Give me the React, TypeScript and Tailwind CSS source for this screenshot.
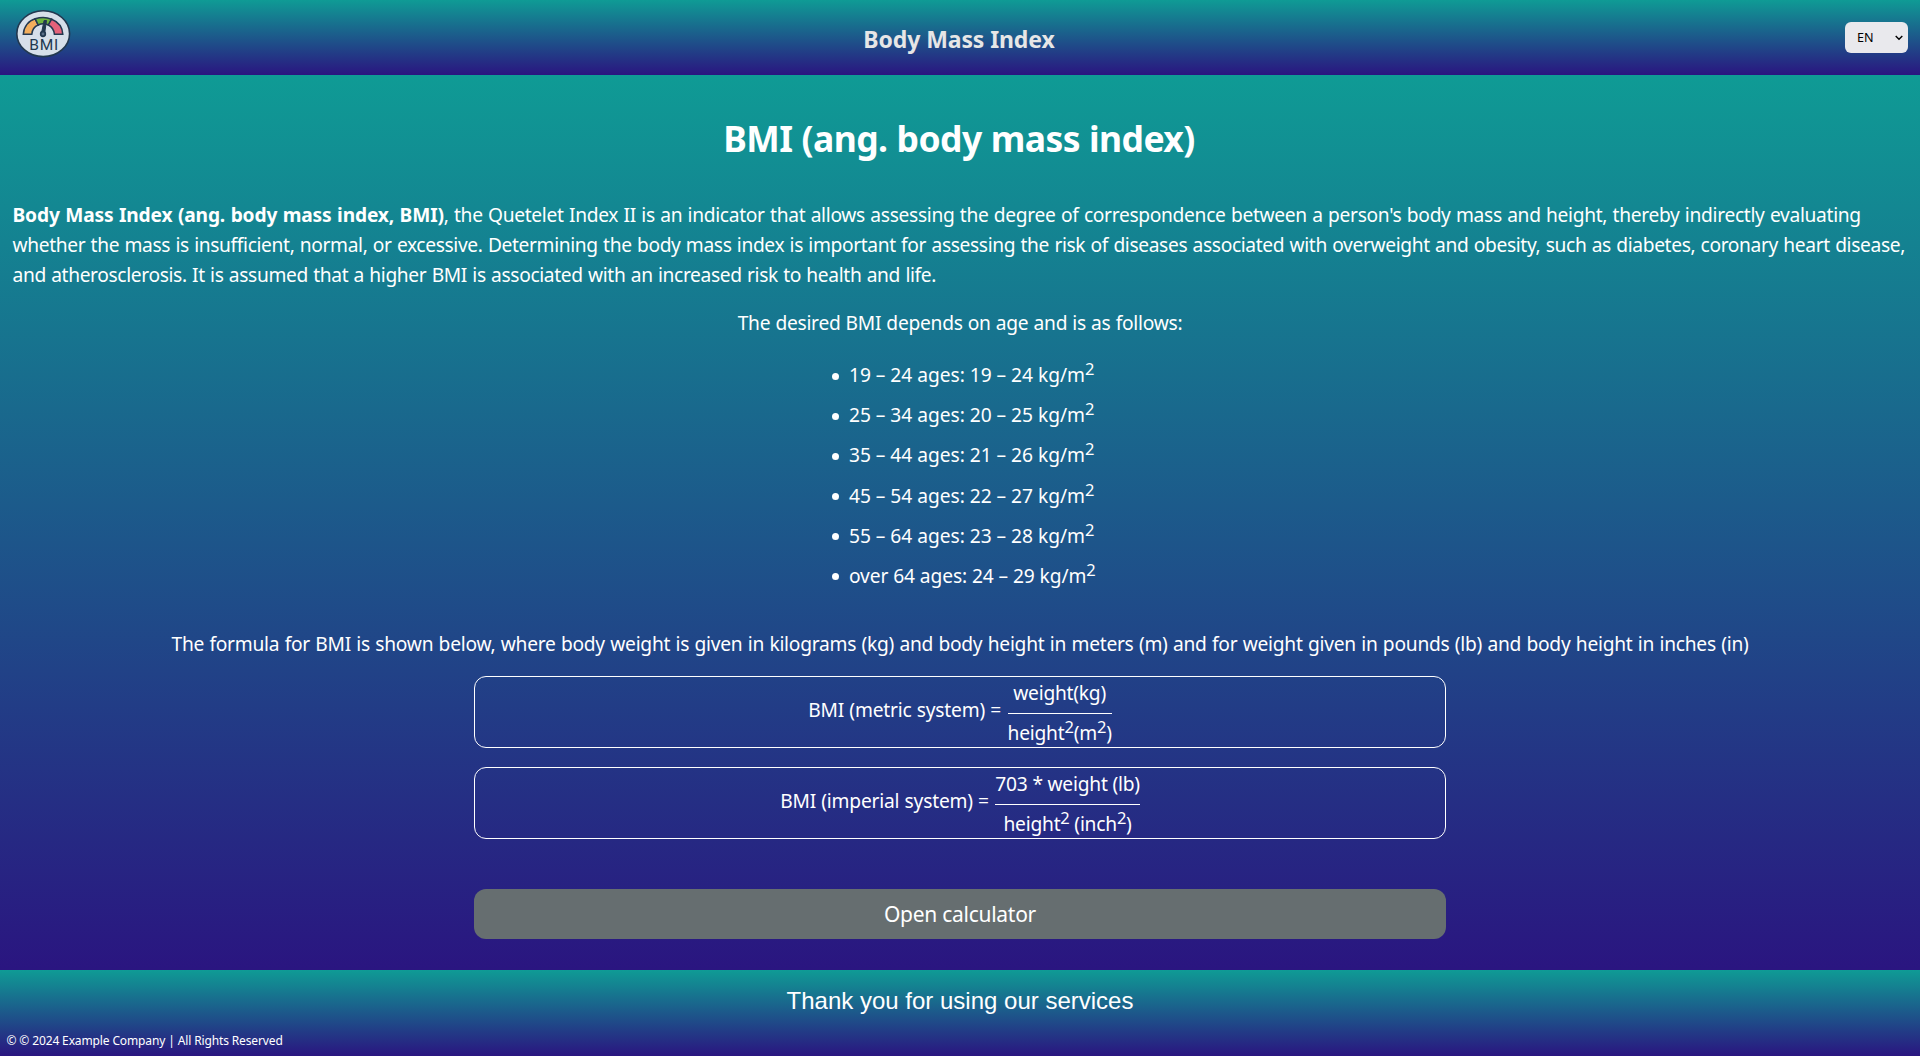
import type { ReactNode } from 'react';

const ranges = [
  '19 – 24 ages: 19 – 24 kg/m',
  '25 – 34 ages: 20 – 25 kg/m',
  '35 – 44 ages: 21 – 26 kg/m',
  '45 – 54 ages: 22 – 27 kg/m',
  '55 – 64 ages: 23 – 28 kg/m',
  'over 64 ages: 24 – 29 kg/m',
];

function Squared() {
  return <sup className="top-[-7px] align-baseline text-[16.5px] leading-[0]">2</sup>;
}

function Logo() {
  return (
    <svg className="h-[56px] w-[64px]" viewBox="10 5 64 56" fill="none" stroke="#22384f">
      <ellipse cx="43.2" cy="33.7" rx="26.4" ry="22.9" fill="#d6dfe9" strokeWidth="1.6" />
      <path d="M23.3 34.2C23.7 26.8 28.6 20.6 35.2 18.8L38.2 25C34.6 26.4 32.2 29.8 31.8 34.2Z" fill="#f2ae5c" strokeWidth="1.5" />
      <path d="M35.2 18.8C40.3 17 46.6 17 51.6 19.2L48.4 25C45.2 23.5 41.2 23.6 38.2 25Z" fill="#6db33f" strokeWidth="1.5" />
      <path d="M51.6 19.2C58.3 21.8 62.4 27.4 62.8 34.2H54.4C54 30.2 51.8 26.8 48.4 25Z" fill="#e4627a" strokeWidth="1.5" />
      <path d="M41.6 32.5L44.1 20.5H46.5L44.7 33Z" fill="#22384f" strokeWidth="1" />
      <circle cx="43" cy="34" r="2.3" fill="#5b7088" strokeWidth="1.7" />
      <text
        x="29.2"
        y="50"
        textLength="29"
        lengthAdjust="spacing"
        fill="#22384f"
        stroke="none"
        className="font-['Roboto',sans-serif] text-[15.5px]"
      >
        BMI
      </text>
    </svg>
  );
}

function Formula({ label, top, bottom }: { label: string; top: ReactNode; bottom: ReactNode }) {
  return (
    <div className="flex h-[72px] w-[972px] justify-center gap-[6.5px] rounded-xl border border-white">
      <span className="pt-[18px] leading-[30px] tracking-[-0.19px] [word-spacing:0.4px]">{label}</span>
      <div className="flex flex-col pt-px text-center tracking-[-0.22px]">
        <span className="h-[36px] shrink-0 border-b border-white leading-[30px]">{top}</span>
        <span className="h-[33px] pt-[4px] leading-[30px]">{bottom}</span>
      </div>
    </div>
  );
}

export default function App() {
  return (
    <div className="flex h-[1056px] w-full flex-col font-['Noto_Sans',sans-serif] text-[19.2px] text-white">
      <header className="grid h-[75px] grid-cols-[1fr_auto_1fr] bg-linear-to-b/srgb from-[#0f9b95] to-[#2a1580]">
        <div className="pt-[5px] pl-[10px]">
          <Logo />
        </div>
        <div className="pt-[19px] pr-[2px] text-[23px] leading-[40px] font-bold tracking-[-0.1px] text-[#e6e6e6]">
          Body Mass Index
        </div>
        <div className="flex justify-end pt-[22px] pr-[12px]">
          <button className="flex h-[31px] w-[63px] items-center justify-between rounded-md bg-[#e9e9ed] pr-[5px] pl-[12px] text-[12.6px] text-black">
            <span className="pt-px">EN</span>
            <svg className="h-[6px] w-[8px]" viewBox="0 0 8 6" fill="none" stroke="black" strokeWidth="1.4">
              <path d="M0.7 1L4 4.3L7.3 1" />
            </svg>
          </button>
        </div>
      </header>

      <main className="flex h-[895px] flex-col items-center bg-linear-to-b/srgb from-[#0f9b95] to-[#2a1580]">
        <h1 className="mt-[37px] pr-[2px] text-[35.5px] leading-[52px] font-bold tracking-[-0.58px] [word-spacing:0.5px]">
          BMI (ang. body mass index)
        </h1>
        <p className="mt-[36px] w-full pl-[12.5px] leading-[30px] whitespace-nowrap [word-spacing:0.7px]">
          <span className="block tracking-[-0.315px]">
            <strong className="tracking-[-0.16px]">Body Mass Index (ang. body mass index, BMI)</strong>, the Quetelet Index II is an
            indicator that allows assessing the degree of correspondence between a person's body mass and height, thereby
            indirectly evaluating
          </span>
          <span className="block tracking-[-0.36px]">
            whether the mass is insufficient, normal, or excessive. Determining the body mass index is important for assessing
            the risk of diseases associated with overweight and obesity, such as diabetes, coronary heart disease,
          </span>
          <span className="block tracking-[-0.36px]">
            and atherosclerosis. It is assumed that a higher BMI is associated with an increased risk to health and life.
          </span>
        </p>
        <p className="mt-[18px] leading-[30px] tracking-[-0.26px] [word-spacing:0.4px]">
          The desired BMI depends on age and is as follows:
        </p>
        <ul className="mt-[17px] ml-[7px] w-[263px]">
          {ranges.map((range) => (
            <li key={range} className="flex h-[40.17px] items-center leading-[40px] whitespace-nowrap">
              <span className="mt-[2px] mr-[10px] size-[7px] shrink-0 rounded-full bg-white" />
              <span className={range.startsWith('over') ? 'tracking-[-0.1px]' : 'tracking-[-0.03px]'}>
                {range}
                <Squared />
              </span>
            </li>
          ))}
        </ul>
        <p className="mt-[33px] leading-[30px] tracking-[-0.25px] whitespace-nowrap [word-spacing:0.6px]">
          The formula for BMI is shown below, where body weight is given in kilograms (kg) and body height in meters (m) and for
          weight given in pounds (lb) and body height in inches (in)
        </p>
        <div className="mt-[17px] flex flex-col gap-[19px]">
          <Formula
            label="BMI (metric system) ="
            top="weight(kg)"
            bottom={
              <>
                height
                <Squared />
                (m
                <Squared />)
              </>
            }
          />
          <Formula
            label="BMI (imperial system) ="
            top="703 * weight (lb)"
            bottom={
              <>
                height
                <Squared /> (inch
                <Squared />)
              </>
            }
          />
        </div>
        <button className="mt-[50px] h-[50px] w-[972px] rounded-xl bg-[#666e70] text-[21px] leading-[50px] tracking-[-0.27px]">
          Open calculator
        </button>
      </main>

      <footer className="flex h-[86px] flex-col bg-linear-to-b/srgb from-[#0f9b95] to-[#2a1580]">
        <div className="pt-[15px] text-center font-['Liberation_Sans',sans-serif] text-[24px] leading-[32px]">
          Thank you for using our services
        </div>
        <div className="mt-[14px] pl-[6.5px] text-[12px] leading-[20px] tracking-[-0.13px]">
          © © 2024 Example Company | All Rights Reserved
        </div>
      </footer>
    </div>
  );
}
